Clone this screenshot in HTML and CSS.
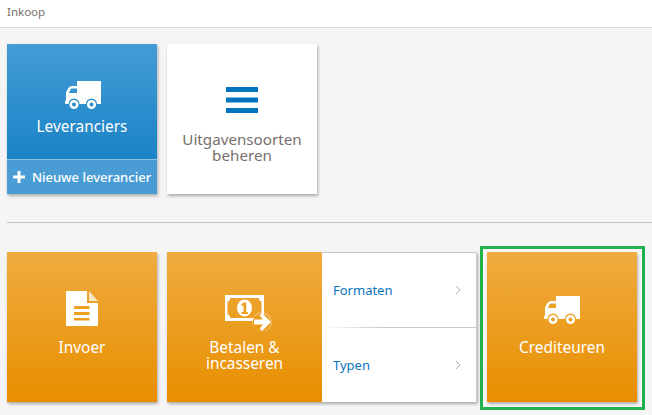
FILE: index.html
```
<!DOCTYPE html>
<html lang="nl">
<head>
<meta charset="utf-8">
<title>Inkoop</title>
<link rel="stylesheet" href="styles.css">
</head>
<body>
<header class="topbar">Inkoop</header>
<main class="content">
  <section class="row row-first">
    <a class="tile tile-blue tile-split">
      <div class="tile-main">
        <svg class="icon-truck icon-truck-blue" viewBox="0 0 36 28"><use href="#truck"/></svg>
        <span class="label">Leveranciers</span>
      </div>
      <div class="tile-action">
        <svg class="icon-plus" viewBox="0 0 12 12"><path d="M4.500 0h3v4.500H12v3H7.500V12h-3V7.500H0v-3h4.500z"/></svg>
        <span>Nieuwe leverancier</span>
      </div>
    </a>
    <a class="tile tile-white tile-menu">
      <svg class="icon-menu" viewBox="0 0 32 26"><path d="M0 .5a.5.5 0 0 1 .5-.5h31a.5.5 0 0 1 .5.5V5H0zM0 10.500h32v5H0zM0 21h32v5H0z"/></svg>
      <span class="label label-grey">Uitgavensoorten<br>beheren</span>
    </a>
  </section>
  <hr class="divider">
  <section class="row">
    <a class="tile tile-orange tile-doc">
      <svg class="icon-doc" viewBox="0 0 32 35">
        <path fill="#fff" fill-rule="evenodd" d="M1 0h20v12h11v22a1 1 0 0 1-1 1H1a1 1 0 0 1-1-1V1a1 1 0 0 1 1-1zM8 15v3h15.500v-3zM8 21v3h15.500v-3zM8 27v2.500h15.500V27z"/>
        <path fill="#fff" fill-opacity=".72" d="M23 0l9 10h-9z"/>
      </svg>
      <span class="label">Invoer</span>
    </a>
    <div class="tile-wide">
      <a class="tile tile-orange tile-pay">
        <svg class="icon-money" viewBox="0 0 47 38">
          <path fill="#fff" fill-rule="evenodd" d="M0 0h39v26H0zM5 3c.5 2-1 3-2.500 3.500v13C4 20 5.500 21 5 23h29c-.5-2 1-3 2.500-3.500v-13C35 6 33.500 5 34 3z"/>
          <ellipse cx="19.500" cy="13" rx="7.500" ry="8.500" fill="#fff"/>
          <path fill="#ed9f24" d="M18.500 7.500h2.700V17h1.600v2h-6.300v-2h2v-6.500l-2 .8V9.300z"/>
          <circle cx="37" cy="27" r="10" fill="#fff" fill-opacity=".3"/>
          <circle cx="36.500" cy="27.500" r="9" fill="#ec9a1b"/>
          <path fill="#fff" d="M37 18l9 9-9 9-2.500-2.500 3.500-4h-9v-5h9l-3.500-4z"/>
        </svg>
        <span class="label">Betalen &amp;<br>incasseren</span>
      </a>
      <ul class="links">
        <li class="link"><span>Formaten</span><svg class="chev" viewBox="0 0 6 10"><path d="M1 1l4 4-4 4"/></svg></li>
        <li class="link"><span>Typen</span><svg class="chev" viewBox="0 0 6 10"><path d="M1 1l4 4-4 4"/></svg></li>
      </ul>
    </div>
    <a class="tile tile-orange tile-selected">
      <svg class="icon-truck" viewBox="0 0 36 28"><use href="#truck"/></svg>
      <span class="label">Crediteuren</span>
    </a>
  </section>
</main>
<svg class="defs" width="0" height="0">
  <defs>
    <path id="truck" fill="#fff" fill-rule="evenodd" d="M12 0h24v23H32a5.500 5.500 0 0 0-11 0h-6.500a5.500 5.500 0 0 0-11 0H1a1 1 0 0 1-1-1v-2l1-.5V13c0-3 3-8 6-8h5zM6.500 7.500C5.500 8.500 4.500 10 4 12h8V7.500zM9 19a4.500 4.500 0 1 1 0 9 4.500 4.500 0 0 1 0-9zm0 2.500a2 2 0 1 0 0 4 2 2 0 0 0 0-4zM26.500 19a4.500 4.500 0 1 1 0 9 4.500 4.500 0 0 1 0-9zm0 2.500a2 2 0 1 0 0 4 2 2 0 0 0 0-4z"/>
  </defs>
</svg>
</body>
</html>
```
FILE: styles.css
```
* { box-sizing: border-box; }
html, body { margin: 0; height: 100%; }
body {
  background: #f5f5f5;
  font-family: "Noto Sans", "Open Sans", sans-serif;
  overflow: hidden;
}
.topbar {
  height: 28px;
  padding: 4px 7px 0;
  background: #fff;
  border-bottom: 1px solid #ddd;
  font-size: 11.500px;
  line-height: 16px;
  color: #77706c;
}
.content { padding: 16px 0 0 7px; }
.row { display: flex; gap: 10px; }
.divider {
  height: 1px;
  margin: 28px 0 29px;
  border: 0;
  background: #c4c4c4;
}
.tile {
  width: 150px;
  height: 150px;
  flex: none;
  display: flex;
  flex-direction: column;
  align-items: center;
  justify-content: flex-start;
  text-align: center;
  box-shadow: 1px 2px 3px rgba(0,0,0,.3);
}
.tile-blue { background: linear-gradient(#439cd5, #0f7bc2); color: #fff; }
.tile-white { background: #fff; color: #77706c; }
.tile-orange { background: linear-gradient(#efac40, #e88e00); color: #fff; }
.tile-menu { padding-top: 43px; }
.tile-doc { padding-top: 39px; }
.tile-main {
  height: 115px;
  width: 100%;
  display: flex;
  flex-direction: column;
  align-items: center;
  padding-top: 37px;
}
.tile-action {
  width: 100%;
  height: 35px;
  display: flex;
  align-items: center;
  justify-content: center;
  gap: 7px;
  background: #4a9dd4;
  border-top: 1px solid #8cc3e6;
  font-size: 13px;
  font-weight: 500;
  white-space: nowrap;
}
.label { font-size: 15.400px; line-height: 16px; }
.label-grey { font-size: 15.200px; color: #77706c; }
.icon-truck { width: 36px; height: 28px; margin-bottom: 16px; }
.icon-truck-blue { margin: 0 0 10px 2px; }
.icon-plus { width: 12px; height: 12px; fill: #fff; }
.icon-menu { width: 32px; height: 26px; fill: #0073bd; margin-bottom: 18px; }
.icon-doc { width: 32px; height: 35px; margin-bottom: 14px; }
.icon-money { width: 47px; height: 38px; margin: 0 0 7px 7px; }
.tile-wide {
  width: 310px;
  height: 150px;
  flex: none;
  display: flex;
  background: #fff;
  box-shadow: 1px 2px 3px rgba(0,0,0,.3);
}
.tile-pay { width: 155px; padding-top: 43px; box-shadow: none; }
.links {
  list-style: none;
  margin: 0;
  padding: 0;
  flex: 1;
  display: flex;
  flex-direction: column;
  border: solid #c9c9c9;
  border-width: 1px 1px 0 0;
}
.link {
  flex: 1;
  display: flex;
  align-items: center;
  justify-content: space-between;
  padding: 0 15px 0 11px;
  font-size: 13px;
  color: #0a74bd;
}
.link + .link {
  border-top: 1px solid;
  border-image: linear-gradient(90deg, #fff, #c9c9c9 40%) 1;
}
.chev { width: 6px; height: 10px; fill: none; stroke: #b0b0b8; stroke-width: 1; }
.tile-selected { position: relative; padding-top: 44px; }
.tile-selected::before {
  content: "";
  position: absolute;
  inset: -6px -8px -8px -7px;
  z-index: -1;
  background: #f8f8f8;
  border: 3px solid #22b14c;
}
.defs { position: absolute; }
```
